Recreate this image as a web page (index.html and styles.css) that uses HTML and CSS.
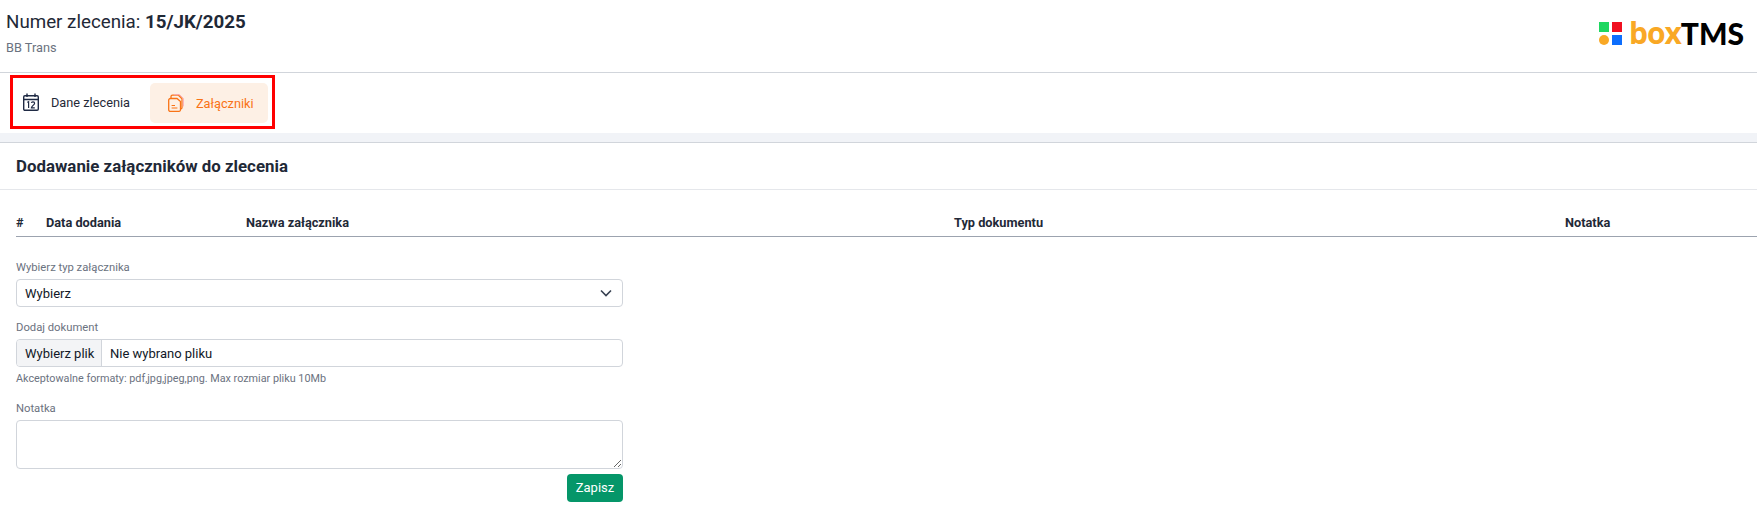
FILE: index.html
```html
<!DOCTYPE html>
<html lang="pl">
<head>
<meta charset="utf-8">
<title>Numer zlecenia</title>
<link rel="stylesheet" href="styles.css">
</head>
<body>
<header class="top">
  <div class="top-text">
    <h1 class="order">Numer zlecenia: <strong>15/JK/2025</strong></h1>
    <p class="client">BB Trans</p>
  </div>
  <div class="logo">
    <span class="logo-marks">
      <svg width="23" height="23" viewBox="0 0 23 23">
        <rect x="0" y="0" width="10" height="10" fill="#1ed760"/>
        <rect x="13" y="0" width="10" height="10" fill="#f01020"/>
        <circle cx="5" cy="18" r="5" fill="#f9a825"/>
        <rect x="13" y="13" width="10" height="10" fill="#0d6efd"/>
      </svg>
    </span>
    <span class="logo-box">box</span><span class="logo-tms">TMS</span>
  </div>
</header>
<nav class="tabs">
  <div class="tab-frame">
    <a class="tab">
      <svg class="tab-icon" width="16" height="18" viewBox="0 0 16 18" fill="none" stroke="#1f2a44" stroke-width="1.4">
        <rect x="0.7" y="2.7" width="14.6" height="14.6" rx="1.2"/>
        <path d="M0.7 6.5H15.3M4 0.6V4M12 0.6V4"/>
        <path d="M4.4 9.4 5.6 8.8V15M8.4 9.8C8.6 8.4 11.6 8.4 11.6 10.2 11.6 11.6 8.6 13.2 8.4 14.8H11.8" stroke-width="1.2"/>
      </svg>
      <span>Dane zlecenia</span>
    </a>
    <a class="tab tab-active">
      <svg class="tab-icon" width="16" height="18" viewBox="0 0 16 18" fill="none" stroke="#f97316" stroke-width="1.3">
        <path d="M2.5 4.5H9L12.5 7.5V15.8C12.5 16.7 12 17.3 11.2 17.3H2.5C1.4 17.3 0.7 16.7 0.7 15.8V6C0.7 5.1 1.4 4.5 2.5 4.5Z"/>
        <path d="M3 4.4V2.6C3 1.7 3.6 1.2 4.5 1.2H10.5L14 4.7V13.4C14 14.2 13.6 14.8 12.8 14.8"/>
        <path d="M6 0.7H11.6L15.3 4.4V12.4" stroke="#f9a8b4" stroke-width="1"/>
        <path d="M3.6 11.5H7M3.6 14H9.4" stroke-width="1.2"/>
      </svg>
      <span>Załączniki</span>
    </a>
  </div>
</nav>
<div class="band"></div>
<main class="panel">
  <h2 class="panel-title">Dodawanie załączników do zlecenia</h2>
  <div class="table-head">
    <span class="col col-num">#</span>
    <span class="col col-date">Data dodania</span>
    <span class="col col-name">Nazwa załącznika</span>
    <span class="col col-type">Typ dokumentu</span>
    <span class="col col-note">Notatka</span>
  </div>
  <form class="form">
    <label class="label">Wybierz typ załącznika</label>
    <div class="select">
      <span>Wybierz</span>
      <svg width="12" height="8" viewBox="0 0 12 8" fill="none" stroke="#374151" stroke-width="1.6"><path d="M1 1.5 6 6.5 11 1.5"/></svg>
    </div>
    <label class="label label-next">Dodaj dokument</label>
    <div class="file">
      <span class="file-btn">Wybierz plik</span>
      <span class="file-name">Nie wybrano pliku</span>
    </div>
    <p class="hint">Akceptowalne formaty: pdf,jpg,jpeg,png. Max rozmiar pliku 10Mb</p>
    <label class="label label-note">Notatka</label>
    <textarea class="area"></textarea>
    <div class="actions"><button class="save" type="button">Zapisz</button></div>
  </form>
</main>
</body>
</html>
```
FILE: styles.css
```css
* { box-sizing: border-box; }
html, body { margin: 0; padding: 0; background: #fff; }
body { font-family: Roboto, "Liberation Sans", sans-serif; color: #1f2937; height: 515px; overflow: hidden; }

.top { height: 73px; display: flex; justify-content: space-between; align-items: flex-start; border-bottom: 1px solid #d1d5db; padding: 0 13px 0 6px; }
.order { margin: 10px 0 0; font-size: 18.75px; line-height: 24px; font-weight: 400; color: #1f2937; }
.order strong { font-weight: 700; }
.client { margin: 6px 0 0; font-size: 12.75px; line-height: 16px; color: #6b7280; }

.logo { display: flex; align-items: center; margin-top: 15px; height: 36px; line-height: 36px; }
.logo-marks { display: flex; margin-right: 7px; }
.logo-box { font-family: "Open Sans", sans-serif; font-size: 30px; font-weight: 700; color: #f9a825; letter-spacing: -1px; }
.logo-tms { font-family: "Lato", sans-serif; font-size: 30px; font-weight: 900; color: #000; }

.tabs { height: 60px; padding: 2px 0 0 10px; }
.tab-frame { width: 265px; height: 54px; border: 3px solid #f00; display: flex; align-items: center; padding-left: 10px; gap: 20px; }
.tab { display: flex; align-items: center; height: 40px; font-size: 12.75px; color: #1f2937; gap: 12px; }
.tab-active { width: 118px; margin-top: 2px; padding-left: 18px; background: #fdf0e5; border-radius: 5px; color: #f97316; }

.band { height: 10px; background: #f1f3f7; border-bottom: 1px solid #d1d5db; }

.panel-title { margin: 0; height: 47px; padding: 13px 16px 0; font-size: 16.875px; line-height: 20px; font-weight: 700; color: #1f2937; border-bottom: 1px solid #e5e7eb; }
.table-head { margin: 25px 0 0 16px; height: 22px; display: flex; align-items: flex-start; border-bottom: 1px solid #9ca3af; font-size: 12.75px; line-height: 16px; font-weight: 700; color: #1f2937; }
.col { display: block; }
.col-num { width: 30px; }
.col-date { width: 200px; }
.col-name { width: 708px; }
.col-type { width: 611px; }

.form { display: flex; flex-direction: column; width: 607px; margin: 23px 0 0 16px; }
.label { font-size: 11.25px; line-height: 16px; color: #6b7280; margin-bottom: 3px; }
.label-next { margin-top: 13px; }
.label-note { margin-top: 14px; margin-bottom: 3px; }
.select { height: 28px; border: 1px solid #d1d5db; border-radius: 4px; display: flex; align-items: center; justify-content: space-between; padding: 0 10px 0 8px; font-size: 13px; color: #111827; }
.file { height: 28px; border: 1px solid #d1d5db; border-radius: 4px; display: flex; align-items: stretch; font-size: 13px; color: #111827; overflow: hidden; }
.file-btn { display: flex; align-items: center; width: 85px; padding-left: 8px; background: #f3f4f6; border-right: 1px solid #d1d5db; }
.file-name { display: flex; align-items: center; padding-left: 8px; }
.hint { margin: 4px 0 0; font-size: 10.8px; line-height: 16px; color: #6b7280; }
.area { display: block; width: 100%; height: 49px; border: 1px solid #d1d5db; border-radius: 4px; padding: 4px 8px; font: 13px Roboto, sans-serif; background: #fff; outline: none; }
.actions { display: flex; justify-content: flex-end; margin-top: 5px; }
.save { width: 56px; height: 28px; border: 0; border-radius: 4px; background: #059669; color: #fff; font: 13px/16px Roboto, sans-serif; padding: 0; }
```
